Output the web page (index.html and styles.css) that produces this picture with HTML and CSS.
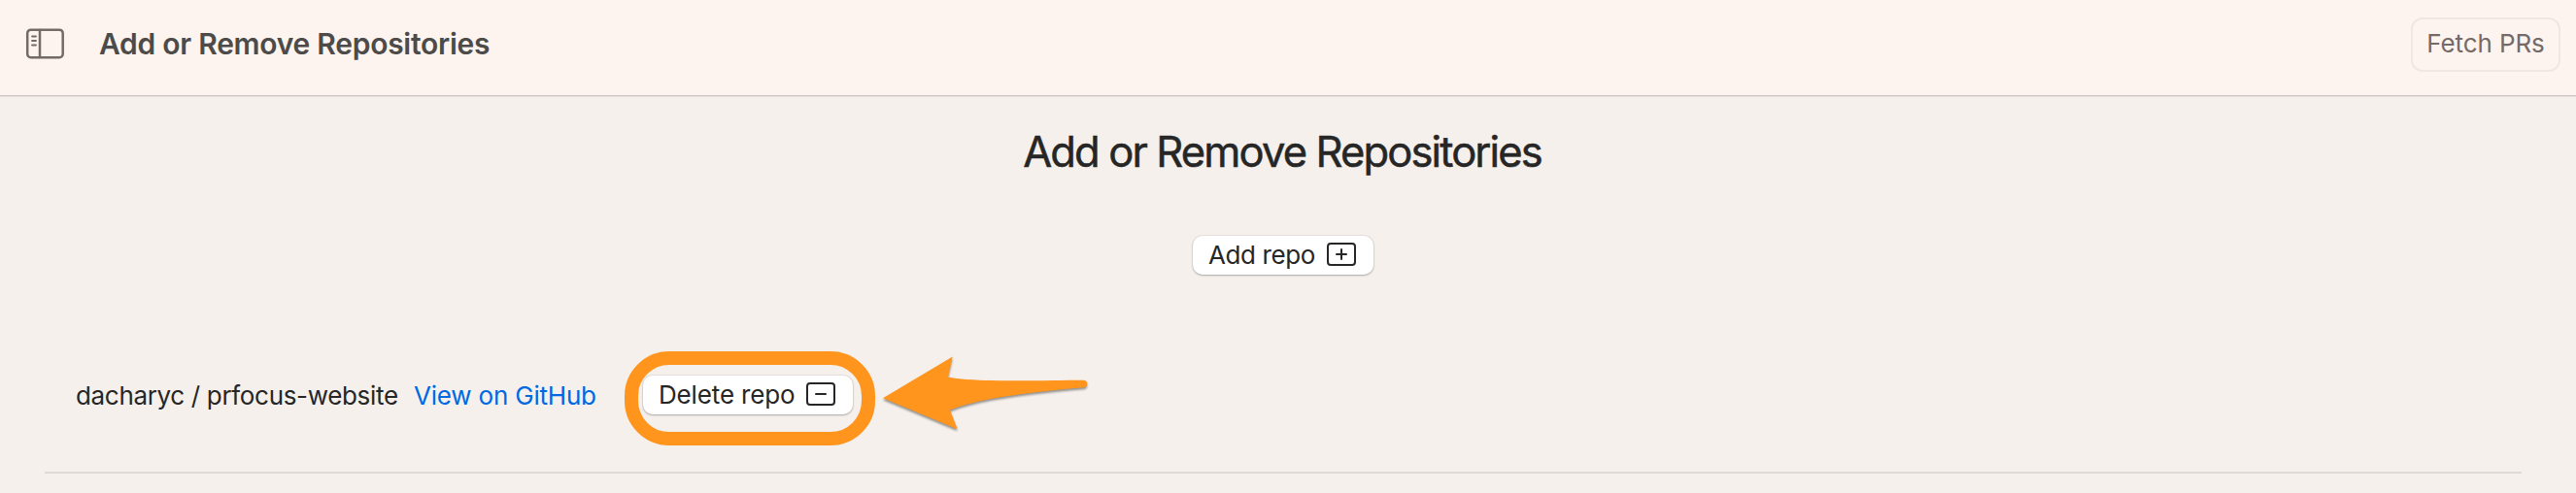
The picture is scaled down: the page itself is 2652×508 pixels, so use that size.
FILE: index.html
```html
<!DOCTYPE html>
<html lang="en">
<head>
<meta charset="utf-8">
<title>Add or Remove Repositories</title>
<link rel="stylesheet" href="styles.css">
</head>
<body>
<header class="toolbar">
  <svg class="sidebar-icon" width="40" height="32" viewBox="0 0 40 32" fill="none" stroke="#756a66" stroke-width="2.5" stroke-linecap="round">
    <rect x="2.200" y="1.700" width="36.500" height="28.500" rx="3.500"/>
    <path d="M15 2v28"/>
    <path stroke-width="1.800" d="M7 8.500h4M7 13h4M7 17.500h4"/>
  </svg>
  <div class="toolbar-title"><span class="t">Add or Remove Repositories</span></div>
  <button class="fetch"><span class="t">Fetch PRs</span></button>
</header>
<main class="content">
  <h1 class="heading"><span class="t">Add or Remove Repositories</span></h1>
  <button class="btn add"><span class="t">Add repo</span>
    <svg width="30" height="24" viewBox="0 0 30 24" fill="none" stroke="#262626" stroke-width="2" stroke-linecap="round"><rect x="1" y="1" width="28" height="22" rx="3"/><path d="M10 12h10M15 7v10"/></svg>
  </button>
  <section class="repo-row">
    <span class="repo-name"><span class="t">dacharyc / prfocus-website</span></span>
    <a class="repo-link"><span class="t">View on GitHub</span></a>
    <div class="marked">
      <button class="btn delete"><span class="t">Delete repo</span>
        <svg width="30" height="24" viewBox="0 0 30 24" fill="none" stroke="#262626" stroke-width="2" stroke-linecap="round"><rect x="1" y="1" width="28" height="22" rx="3"/><path d="M10 12h10"/></svg>
      </button>
      <div class="ring"></div>
      <svg class="arrow" width="220" height="84" viewBox="0 0 220 84"><path fill="#ff951c" d="M3 44.200L74.700 1.500L70 22.500C95 28 165 26 209.500 25.800C214.500 26 214.500 32.500 210 33.200C165 37 100 44 72 56.500L79.700 76.200Z"/></svg>
    </div>
  </section>
</main>
</body>
</html>
```
FILE: styles.css
```css
* { box-sizing: border-box; }
body {
  margin: 0;
  width: 2652px;
  height: 508px;
  overflow: hidden;
  background: #f5f0ec;
  color: #262626;
  font: 400 26px/32px Inter, "Liberation Sans", sans-serif;
}
.t { white-space: nowrap; }
button { font: inherit; color: inherit; border: 0; padding: 0; }
.toolbar {
  display: flex;
  align-items: flex-start;
  height: 100px;
  padding: 0 16px 0 26px;
  background: #fdf4ef;
  border-bottom: 1px solid #e4dfdc;
  box-shadow: inset 0 -1px #cdc7c4;
}
.sidebar-icon { margin-top: 29px; flex: none; }
.toolbar-title {
  margin: 27px 0 0 36px;
  flex: 1;
  font-size: 30px;
  line-height: 36px;
  font-weight: 600;
  letter-spacing: -0.27px;
  color: #4d4b49;
}
.fetch {
  margin-top: 18px;
  width: 154px;
  height: 56px;
  border: 2px solid #f0e6e2;
  border-radius: 12px;
  background: transparent;
  color: #756a66;
  letter-spacing: -0.1px;
}
.fetch .t { position: relative; top: -1px; }
.content { display: flex; flex-direction: column; }
.heading {
  margin: 28px 0 0;
  padding-right: 12px;
  text-align: center;
  font-size: 43.5px;
  line-height: 56px;
  font-weight: 400;
  letter-spacing: -1.87px;
  -webkit-text-stroke: 0.5px currentColor;
}
.btn {
  display: flex;
  align-items: flex-start;
  justify-content: space-between;
  height: 40px;
  border-radius: 10px;
  background: #fff;
  box-shadow: 0 0 1px 1px rgba(0,0,0,.06), 0 1px 2px rgba(0,0,0,.25);
}
.btn .t { margin-top: 4px; }
.btn svg { margin-top: 7px; flex: none; }
.add { width: 186px; margin: 59px 0 0 1228px; padding: 0 18px 0 16px; letter-spacing: -0.4px; }
.repo-row {
  display: flex;
  height: 205px;
  margin: 0 56px 0 46px;
  padding-left: 32px;
  border-bottom: 2px solid #dedad6;
}
.repo-name { width: 348px; margin-top: 109px; letter-spacing: -0.33px; }
.repo-link { width: 236px; margin-top: 109px; color: #0068e1; letter-spacing: -0.2px; }
.marked { position: relative; width: 216px; height: 40px; margin-top: 104px; }
.delete { width: 216px; padding: 0 18px 0 16px; letter-spacing: -0.15px; }
.ring {
  position: absolute;
  left: -19px;
  top: -25px;
  width: 258px;
  height: 97px;
  border: 14px solid #ff951c;
  border-radius: 46px;
}
.arrow {
  position: absolute;
  left: 244px;
  top: -21px;
  filter: drop-shadow(0 2px 1px rgba(0,0,0,.4));
}
```
